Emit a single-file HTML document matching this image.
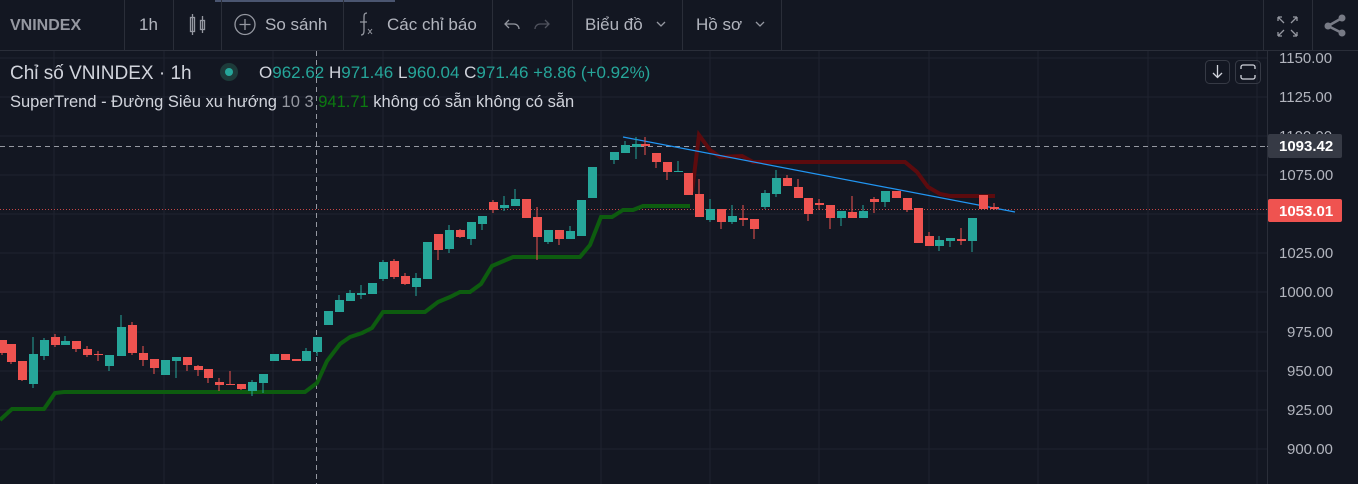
<!DOCTYPE html>
<html><head><meta charset="utf-8"><style>
body{margin:0;width:1358px;height:484px;overflow:hidden;background:#131722;font-family:"Liberation Sans",sans-serif;}
</style></head><body>
<svg width="1358" height="484" style="position:absolute;left:0;top:0" font-family="Liberation Sans, sans-serif">
<rect width="1358" height="484" fill="#131722"/>
<rect x="215" y="0" width="180" height="2" fill="#4a5570"/>
<line x1="0" y1="50.5" x2="1358" y2="50.5" stroke="#2a2e39"/>
<g stroke="#2a2e39"><line x1="124.5" y1="0" x2="124.5" y2="50"/><line x1="173.5" y1="0" x2="173.5" y2="50"/><line x1="221.5" y1="0" x2="221.5" y2="50"/><line x1="343.5" y1="0" x2="343.5" y2="50"/><line x1="492.5" y1="0" x2="492.5" y2="50"/><line x1="572.5" y1="0" x2="572.5" y2="50"/><line x1="682.5" y1="0" x2="682.5" y2="50"/><line x1="781.5" y1="0" x2="781.5" y2="50"/><line x1="1263.5" y1="0" x2="1263.5" y2="50"/><line x1="1312.5" y1="0" x2="1312.5" y2="50"/><line x1="1267.5" y1="51" x2="1267.5" y2="484"/></g>
<g stroke="#1f2330">
<line x1="0" y1="58" x2="1267" y2="58"/><line x1="0" y1="97" x2="1267" y2="97"/><line x1="0" y1="136" x2="1267" y2="136"/><line x1="0" y1="175" x2="1267" y2="175"/><line x1="0" y1="214" x2="1267" y2="214"/><line x1="0" y1="253" x2="1267" y2="253"/><line x1="0" y1="292" x2="1267" y2="292"/><line x1="0" y1="332" x2="1267" y2="332"/><line x1="0" y1="371" x2="1267" y2="371"/><line x1="0" y1="410" x2="1267" y2="410"/><line x1="0" y1="449" x2="1267" y2="449"/>
<line x1="54" y1="51" x2="54" y2="484"/><line x1="164" y1="51" x2="164" y2="484"/><line x1="273" y1="51" x2="273" y2="484"/><line x1="383" y1="51" x2="383" y2="484"/><line x1="492" y1="51" x2="492" y2="484"/><line x1="601" y1="51" x2="601" y2="484"/><line x1="710" y1="51" x2="710" y2="484"/><line x1="819" y1="51" x2="819" y2="484"/><line x1="929" y1="51" x2="929" y2="484"/><line x1="1038" y1="51" x2="1038" y2="484"/><line x1="1148" y1="51" x2="1148" y2="484"/><line x1="1257" y1="51" x2="1257" y2="484"/>
</g>
<line x1="316.5" y1="51" x2="316.5" y2="484" stroke="#9598a1" stroke-dasharray="5,4"/>
<line x1="0" y1="146.5" x2="1267" y2="146.5" stroke="#9598a1" stroke-dasharray="5,4"/>
<line x1="0" y1="209.5" x2="1267" y2="209.5" stroke="#ef5350" stroke-dasharray="1,2" opacity=".8"/>
<polyline fill="none" stroke="#0d5c0f" stroke-width="4" points="0,420 12,409 44,409 55,393 64,392 305,392 317,383 327,361 340,344 350,337 362,333 372,328 383,312 425,312 438,302 450,297 460,292 470,292 481,284 492,266 513,257 580,257 590,245 601,217 612,217 623,210 633,210 643,206 690,206"/>
<polyline fill="none" stroke="#5c0b0e" stroke-width="4" points="692,192 699,135 710,150 720,157 742,156 753,162 905,162 917,172 928,187 940,194 950,196 995,196"/>
<line x1="623" y1="137" x2="1015" y2="212" stroke="#2196f3" stroke-width="1.2"/>
<g>
<path stroke="#ef5350" d="M2 340V355M11 344V364M22 361V381M55 334V347M76 341V352M87 346V357M98 351V361M132 322V355M143 346V366M154 359V374M187 357V371M198 365V376M208 369V383M219 378V391M230 371V385M241 384V390M285 354V360M296 359V361M394 259V279M405 273V285M438 234V260M460 229V238M493 200V213M526 199V218M537 207V260M559 230V245M645 137V155M656 153V168M667 162V180M688 173V195M699 179V217M721 209V229M743 205V226M754 219V239M787 175V186M798 179V198M808 198V221M819 199V210M830 205V229M852 196V218M874 197V213M896 191V198M907 198V212M918 208V243M929 232V246M961 228V245M983 195V209M994 203V210"/>
<path stroke="#26a69a" d="M33 337V388M44 338V360M65 336V345M109 355V371M121 315V356M165 360V375M176 357V378M252 380V396M263 374V393M274 354V361M306 348V361M317 337V356M328 311V325M339 295V312M350 290V301M361 285V299M372 283V294M383 260V281M416 273V296M427 242V279M449 225V253M471 222V245M482 216V230M504 196V211M515 189V206M548 230V244M570 226V239M581 200V236M592 167V198M614 152V164M625 141V153M636 137V159M678 161V172M710 199V222M732 205V224M765 190V209M776 170V197M841 211V226M863 205V218M885 191V207M939 236V251M950 238V247M972 218V252"/>
</g>
<g fill="#ef5350">
<rect x="-2" y="340" width="9" height="13"/><rect x="7" y="344" width="9" height="18"/><rect x="18" y="361" width="9" height="19"/><rect x="51" y="337" width="9" height="8"/><rect x="72" y="341" width="9" height="8"/><rect x="83" y="349" width="9" height="6"/><rect x="94" y="354" width="9" height="1"/><rect x="128" y="325" width="9" height="28"/><rect x="139" y="353" width="9" height="7"/><rect x="150" y="359" width="9" height="9"/><rect x="183" y="357" width="9" height="8"/><rect x="194" y="366" width="9" height="4"/><rect x="204" y="369" width="9" height="9"/><rect x="215" y="382" width="9" height="3"/><rect x="226" y="384" width="9" height="1"/><rect x="237" y="384" width="9" height="5"/><rect x="281" y="354" width="9" height="6"/><rect x="292" y="359" width="9" height="2"/><rect x="390" y="261" width="9" height="16"/><rect x="401" y="276" width="9" height="8"/><rect x="434" y="234" width="9" height="16"/><rect x="456" y="230" width="9" height="7"/><rect x="489" y="202" width="9" height="8"/><rect x="522" y="199" width="9" height="19"/><rect x="533" y="217" width="9" height="20"/><rect x="555" y="230" width="9" height="9"/><rect x="641" y="144" width="9" height="2"/><rect x="652" y="153" width="9" height="9"/><rect x="663" y="162" width="9" height="10"/><rect x="684" y="173" width="9" height="22"/><rect x="695" y="194" width="9" height="23"/><rect x="717" y="209" width="9" height="13"/><rect x="739" y="218" width="9" height="2"/><rect x="750" y="219" width="9" height="10"/><rect x="783" y="178" width="9" height="8"/><rect x="794" y="187" width="9" height="11"/><rect x="804" y="198" width="9" height="16"/><rect x="815" y="203" width="9" height="2"/><rect x="826" y="205" width="9" height="13"/><rect x="848" y="212" width="9" height="6"/><rect x="870" y="199" width="9" height="3"/><rect x="892" y="191" width="9" height="7"/><rect x="903" y="198" width="9" height="12"/><rect x="914" y="208" width="9" height="35"/><rect x="925" y="236" width="9" height="10"/><rect x="957" y="239" width="9" height="2"/><rect x="979" y="195" width="9" height="14"/><rect x="990" y="207" width="9" height="2"/>
</g>
<g fill="#26a69a">
<rect x="29" y="354" width="9" height="30"/><rect x="40" y="340" width="9" height="16"/><rect x="61" y="341" width="9" height="4"/><rect x="105" y="355" width="9" height="11"/><rect x="117" y="327" width="9" height="29"/><rect x="161" y="360" width="9" height="15"/><rect x="172" y="357" width="9" height="4"/><rect x="248" y="382" width="9" height="9"/><rect x="259" y="374" width="9" height="9"/><rect x="270" y="354" width="9" height="7"/><rect x="302" y="351" width="9" height="10"/><rect x="313" y="337" width="9" height="15"/><rect x="324" y="311" width="9" height="14"/><rect x="335" y="300" width="9" height="12"/><rect x="346" y="293" width="9" height="8"/><rect x="357" y="293" width="9" height="2"/><rect x="368" y="283" width="9" height="11"/><rect x="379" y="262" width="9" height="17"/><rect x="412" y="278" width="9" height="9"/><rect x="423" y="242" width="9" height="37"/><rect x="445" y="230" width="9" height="19"/><rect x="467" y="222" width="9" height="17"/><rect x="478" y="216" width="9" height="8"/><rect x="500" y="205" width="9" height="3"/><rect x="511" y="199" width="9" height="7"/><rect x="544" y="230" width="9" height="12"/><rect x="566" y="231" width="9" height="8"/><rect x="577" y="200" width="9" height="36"/><rect x="588" y="167" width="9" height="31"/><rect x="610" y="152" width="9" height="8"/><rect x="621" y="145" width="9" height="8"/><rect x="632" y="144" width="9" height="3"/><rect x="674" y="171" width="9" height="1"/><rect x="706" y="209" width="9" height="11"/><rect x="728" y="216" width="9" height="6"/><rect x="761" y="193" width="9" height="14"/><rect x="772" y="178" width="9" height="16"/><rect x="837" y="211" width="9" height="7"/><rect x="859" y="211" width="9" height="7"/><rect x="881" y="191" width="9" height="11"/><rect x="935" y="240" width="9" height="6"/><rect x="946" y="238" width="9" height="3"/><rect x="968" y="218" width="9" height="23"/>
</g>
<g fill="#b2b5be" font-size="15">
<text x="1279" y="63">1150.00</text><text x="1279" y="102">1125.00</text><text x="1279" y="141">1100.00</text><text x="1279" y="180">1075.00</text><text x="1279" y="258">1025.00</text><text x="1279" y="297">1000.00</text><text x="1287" y="337">975.00</text><text x="1287" y="376">950.00</text><text x="1287" y="415">925.00</text><text x="1287" y="454">900.00</text>
</g>
<line x1="1267" y1="146.5" x2="1274" y2="146.5" stroke="#9598a1"/>
<rect x="1268" y="134" width="74" height="24" rx="2" fill="#363a45"/>
<text x="1279" y="151" fill="#fff" font-size="15" font-weight="bold">1093.42</text>
<rect x="1268" y="199" width="74" height="23" rx="2" fill="#ef5350"/>
<text x="1279" y="216" fill="#fff" font-size="15" font-weight="bold">1053.01</text>
<rect x="1205.5" y="60.5" width="24" height="23" rx="4" fill="none" stroke="#363a45"/>
<path d="M1217.5 65v12M1213 73l4.5 4.5 4.5-4.5" stroke="#d1d4dc" fill="none" stroke-width="1.3"/>
<rect x="1235.5" y="60.5" width="25" height="23" rx="4" fill="none" stroke="#363a45"/>
<path d="M1241 69v-2a2 2 0 0 1 2-2h10a2 2 0 0 1 2 2v2M1241 75v2a2 2 0 0 0 2 2h10a2 2 0 0 0 2-2v-2" stroke="#d1d4dc" fill="none" stroke-width="1.3"/>
<g stroke="#9598a1" fill="none" stroke-width="1.3">
<rect x="190.5" y="17.5" width="4" height="14"/><line x1="192.5" y1="14" x2="192.5" y2="35"/><rect x="200.5" y="20.5" width="4" height="9"/><line x1="202.5" y1="16" x2="202.5" y2="33"/>
<circle cx="245" cy="24.5" r="10"/><path d="M245 19v11M239.5 24.5h11"/>
<path d="M367 13c-3 0-3 2-3 5v13c0 3-1 4-3 4M360 22h7"/><path d="M368 29l4 5M372 29l-4 5" stroke-width="1"/>
<path d="M509 20l-4 4 4 4M505 24h9a5 5 0 0 1 5 5"/>
<path d="M545 20l4 4-4 4M549 24h-9a5 5 0 0 0-5 5" stroke="#50535e"/>
<path d="M657 22l4 4 4-4M756 22l4 4 4-4"/>
<path d="M1278 17l6 6M1278 17v4M1278 17h4M1297 17l-6 6M1297 17v4M1297 17h-4M1278 36l6-6M1278 36v-4M1278 36h4M1297 36l-6-6M1297 36v-4M1297 36h-4"/>
</g>
<g fill="#787b86"><circle cx="1328" cy="26" r="3.5"/><circle cx="1342" cy="18" r="3.5"/><circle cx="1342" cy="33" r="3.5"/></g>
<path d="M1328 26l14-8M1328 26l14 7" stroke="#787b86" stroke-width="2.5"/>
<g fill="#b2b5be" font-size="17">
<text x="10" y="30" font-weight="bold" fill="#9598a1" font-size="16">VNINDEX</text>
<text x="139" y="30">1h</text>
<text x="265" y="30">So sánh</text>
<text x="387" y="30">Các chỉ báo</text>
<text x="585" y="30">Biểu đồ</text>
<text x="696" y="30">Hồ sơ</text>
</g>
<text x="10" y="79" fill="#d1d4dc" font-size="19">Chỉ số VNINDEX · 1h</text>
<circle cx="229" cy="72" r="9" fill="#1d3b3a"/><circle cx="229" cy="72" r="4" fill="#26a69a"/>
<text x="259" y="78" font-size="17" fill="#d1d4dc">O<tspan fill="#26a69a">962.62</tspan> H<tspan fill="#26a69a">971.46</tspan> L<tspan fill="#26a69a">960.04</tspan> C<tspan fill="#26a69a">971.46</tspan> <tspan fill="#26a69a">+8.86 (+0.92%)</tspan></text>
<text x="10" y="107" font-size="16.5" fill="#d1d4dc">SuperTrend - Đường Siêu xu hướng <tspan fill="#9598a1">10 3</tspan> <tspan fill="#0c7a10">941.71</tspan> không có sẵn  không có sẵn</text>
</svg>
</body></html>
